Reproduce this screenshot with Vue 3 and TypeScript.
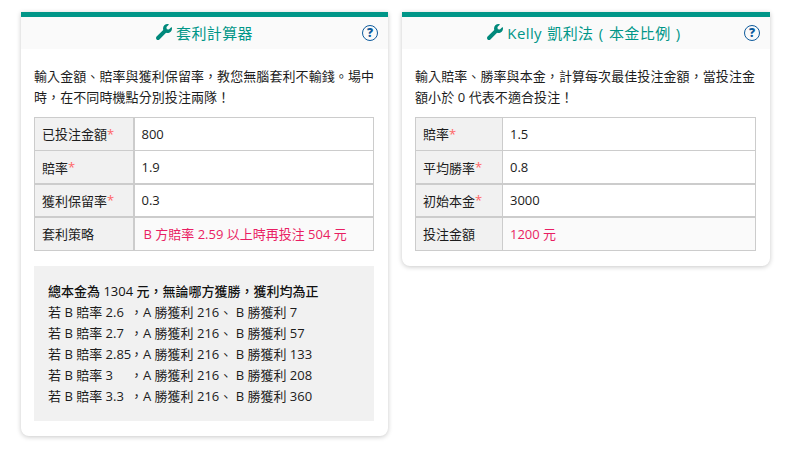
<script setup lang="ts">
const wrench = 'M507.73 109.1c-2.24-9.03-13.54-12.09-20.12-5.51l-74.36 74.36-67.88-11.31-11.31-67.88 74.36-74.36c6.62-6.62 3.43-17.9-5.66-20.16-47.38-11.74-99.55.91-136.58 37.93-39.64 39.64-50.55 97.1-34.05 147.2L18.74 402.76c-24.99 24.99-24.99 65.51 0 90.5 24.99 24.99 65.51 24.99 90.5 0l213.21-213.21c50.12 16.71 107.47 5.68 147.37-34.22 37.07-37.07 49.7-89.32 37.91-136.73z'
const leftRows = [
  { label: '已投注金額', value: '800' },
  { label: '賠率', value: '1.9' },
  { label: '獲利保留率', value: '0.3' },
]
const rightRows = [
  { label: '賠率', value: '1.5' },
  { label: '平均勝率', value: '0.8' },
  { label: '初始本金', value: '3000' },
]
const outcomes = [
  { odds: '2.6', b: '7' },
  { odds: '2.7', b: '57' },
  { odds: '2.85', b: '133' },
  { odds: '3', b: '208' },
  { odds: '3.3', b: '360' },
]
</script>

<template>
  <div class="page">
    <section class="card">
      <header class="head">
        <h2 class="title">
          <svg class="wrench" viewBox="0 0 512 512"><path :d="wrench" /></svg>
          <span>套利計算器</span>
        </h2>
        <span class="help"><span>?</span></span>
      </header>
      <div class="body">
        <p class="intro">輸入金額、賠率與獲利保留率，教您無腦套利不輸錢。場中時，在不同時機點分別投注兩隊！</p>
        <div class="table left">
          <template v-for="r in leftRows" :key="r.label">
            <div class="th">{{ r.label }}<i>*</i></div>
            <div class="td">{{ r.value }}</div>
          </template>
          <div class="th">套利策略</div>
          <div class="td result indent">B 方賠率 2.59 以上時再投注 504 元</div>
        </div>
        <div class="summary">
          <div class="strong">總本金為 1304 元，無論哪方獲勝，獲利均為正</div>
          <div v-for="o in outcomes" :key="o.odds" class="line">
            <span class="odds">若 B 賠率 {{ o.odds }}</span><span>，A 勝獲利 216、 B 勝獲利 {{ o.b }}</span>
          </div>
        </div>
      </div>
    </section>

    <section class="card wide">
      <header class="head">
        <h2 class="title kelly">
          <svg class="wrench" viewBox="0 0 512 512"><path :d="wrench" /></svg>
          <span>Kelly 凱利法 ( 本金比例 )</span>
        </h2>
        <span class="help"><span>?</span></span>
      </header>
      <div class="body">
        <p class="intro">輸入賠率、勝率與本金，計算每次最佳投注金額，當投注金額小於 0 代表不適合投注！</p>
        <div class="table right">
          <template v-for="r in rightRows" :key="r.label">
            <div class="th">{{ r.label }}<i>*</i></div>
            <div class="td">{{ r.value }}</div>
          </template>
          <div class="th">投注金額</div>
          <div class="td result">1200 元</div>
        </div>
      </div>
    </section>
  </div>
</template>

<style>
html, body { margin: 0; background: #fff; }
</style>

<style scoped>
.page {
  display: flex;
  align-items: flex-start;
  gap: 14px;
  width: 800px;
  height: 450px;
  box-sizing: border-box;
  padding: 12px 0 0 21px;
  overflow: hidden;
  font-family: "Open Sans", "Noto Sans CJK TC", sans-serif;
  font-size: 13px;
  color: #1c1c1c;
}
.card {
  width: 367px;
  flex: none;
  background: #fff;
  border-top: 5px solid #009688;
  border-radius: 0 0 8px 8px;
  box-shadow: 0 1px 5px rgba(0, 0, 0, 0.22);
}
.card.wide { width: 368px; }
.head {
  position: relative;
  height: 32px;
  background: #fafafa;
  display: flex;
  align-items: center;
  justify-content: center;
}
.title {
  margin: 0 0 2px;
  display: flex;
  align-items: center;
  gap: 4px;
  font-size: 15px;
  font-weight: 400;
  color: #009688;
  letter-spacing: 0.4px;
}
.kelly { word-spacing: 1px; padding-right: 4px; }
.wrench { width: 16px; height: 16px; fill: #00897b; }
.help {
  position: absolute;
  right: 10px;
  top: 8px;
  width: 16px;
  height: 16px;
  box-sizing: border-box;
  border: 1.5px solid #0d5a9c;
  border-radius: 50%;
  display: flex;
  align-items: center;
  justify-content: center;
  color: #0d5a9c;
  font-size: 12px;
  font-weight: 800;
  line-height: 1;
}
.body { padding: 17px 13px 15px; }
.intro {
  margin: 0 0 9px;
  line-height: 21px;
  letter-spacing: 0.08px;
  width: 341px;
}
.table {
  display: grid;
  box-sizing: border-box;
  border: 1px solid #ccc;
  gap: 1.5px;
  background: #ccc;
  grid-auto-rows: 31.8px;
}
.table.left { width: 340px; grid-template-columns: 98px 1fr; }
.table.right { width: 340.5px; grid-template-columns: 85.5px 1fr; }
.th, .td {
  display: flex;
  align-items: center;
  padding: 0 7px;
}
.th { background: #f1f1f1; }
.th i { color: #f66; font-style: normal; }
.td { background: #fff; }
.result { background: #fafafa; color: #e91e63; }
.indent { padding-left: 9px; }
.summary {
  margin-top: 15px;
  width: 340px;
  height: 155px;
  box-sizing: border-box;
  background: #f1f1f1;
  padding: 15px 14px 14px;
  line-height: 21px;
}
.strong { font-weight: 500; color: #111; }
.line { display: flex; white-space: nowrap; }
.odds { width: 82px; flex: none; }
</style>
